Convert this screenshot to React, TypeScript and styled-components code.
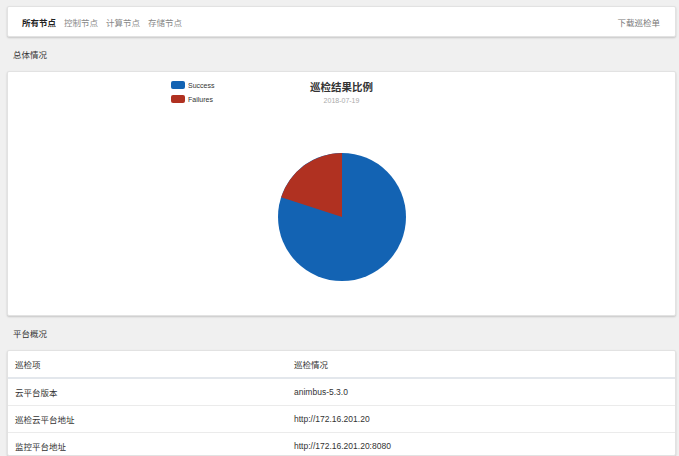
import React from "react";
import styled, { createGlobalStyle } from "styled-components";

const Global = createGlobalStyle`
  html, body { margin: 0; padding: 0; background: #f0f0f0; }
  body {
    font-family: "Liberation Sans", "Noto Sans CJK SC", sans-serif;
    color: #333;
    font-size: 8.5px;
  }
`;

const Page = styled.div`
  padding: 6px 3px 0 7px;
  display: flex;
  flex-direction: column;
  height: 456px;
  box-sizing: border-box;
  overflow: hidden;
`;

const Card = styled.div<{ $h?: number }>`
  background: #fff;
  border: 1px solid #e2e2e2;
  border-radius: 2px;
  box-shadow: 0 1px 2px rgba(0, 0, 0, 0.18);
  box-sizing: border-box;
  ${(p) => (p.$h ? `height: ${p.$h}px;` : "")}
`;

const NavBar = styled(Card)`
  display: flex;
  align-items: center;
  justify-content: space-between;
  padding: 0 15px 0 14px;
`;

const Tabs = styled.div`
  display: flex;
  gap: 8px;
`;

const Tab = styled.span<{ $active?: boolean }>`
  color: ${(p) => (p.$active ? "#222" : "#888")};
  font-weight: ${(p) => (p.$active ? 700 : 400)};
`;

const Download = styled.span`
  color: #777;
`;

const SectionTitle = styled.div<{ $h: number }>`
  height: ${(p) => p.$h}px;
  display: flex;
  align-items: center;
  padding-left: 6px;
  color: #333;
`;

const ChartCard = styled(Card)`
  position: relative;
  display: flex;
  flex-direction: column;
  align-items: center;
  padding-top: 8px;
`;

const ChartTitle = styled.div`
  font-size: 10.5px;
  font-weight: 700;
  color: #333;
  line-height: 14px;
`;

const ChartDate = styled.div`
  font-size: 7px;
  color: #aaa;
  line-height: 10px;
  margin-top: 2px;
`;

const Legend = styled.div`
  position: absolute;
  left: 163px;
  top: 9px;
  display: flex;
  flex-direction: column;
  gap: 6px;
`;

const LegendItem = styled.div`
  display: flex;
  align-items: center;
  gap: 3px;
  font-size: 7px;
  color: #333;
  height: 8px;
`;

const Swatch = styled.span<{ $c: string }>`
  width: 14px;
  height: 8px;
  border-radius: 2px;
  background: ${(p) => p.$c};
`;

const PieWrap = styled.div`
  margin-top: 46px;
`;

const Table = styled(Card)`
  flex: 1;
  overflow: hidden;
`;

const Row = styled.div<{ $head?: boolean }>`
  display: grid;
  grid-template-columns: 279px 1fr;
  height: ${(p) => (p.$head ? 28 : 27)}px;
  align-items: center;
  padding-left: 7px;
  border-bottom: ${(p) => (p.$head ? "2px solid #e3e7ec" : "1px solid #ebebeb")};
  box-sizing: border-box;
  color: #333;
`;

const BLUE = "#1363b3";
const RED = "#b03121";

function Pie() {
  const r = 64;
  const cx = 65;
  const cy = 65;
  const frac = 0.2;
  const a = -Math.PI / 2 - frac * 2 * Math.PI;
  const x = cx + r * Math.cos(a);
  const y = cy + r * Math.sin(a);
  return (
    <svg width="130" height="130" viewBox="0 0 130 130">
      <circle cx={cx} cy={cy} r={r} fill={BLUE} />
      <path d={`M${cx},${cy} L${cx},${cy - r} A${r},${r} 0 0 0 ${x},${y} Z`} fill={RED} />
    </svg>
  );
}

const rows = [
  ["云平台版本", "animbus-5.3.0"],
  ["巡检云平台地址", "http://172.16.201.20"],
  ["监控平台地址", "http://172.16.201.20:8080"],
];

export default function App() {
  return (
    <>
      <Global />
      <Page>
        <NavBar $h={31}>
          <Tabs>
            <Tab $active>所有节点</Tab>
            <Tab>控制节点</Tab>
            <Tab>计算节点</Tab>
            <Tab>存储节点</Tab>
          </Tabs>
          <Download>下载巡检单</Download>
        </NavBar>
        <SectionTitle $h={34}>总体情况</SectionTitle>
        <ChartCard $h={245}>
          <Legend>
            <LegendItem>
              <Swatch $c={BLUE} />
              Success
            </LegendItem>
            <LegendItem>
              <Swatch $c={RED} />
              Failures
            </LegendItem>
          </Legend>
          <ChartTitle>巡检结果比例</ChartTitle>
          <ChartDate>2018-07-19</ChartDate>
          <PieWrap>
            <Pie />
          </PieWrap>
        </ChartCard>
        <SectionTitle $h={34}>平台概况</SectionTitle>
        <Table>
          <Row $head>
            <span>巡检项</span>
            <span>巡检情况</span>
          </Row>
          {rows.map(([k, v]) => (
            <Row key={k}>
              <span>{k}</span>
              <span>{v}</span>
            </Row>
          ))}
        </Table>
      </Page>
    </>
  );
}
